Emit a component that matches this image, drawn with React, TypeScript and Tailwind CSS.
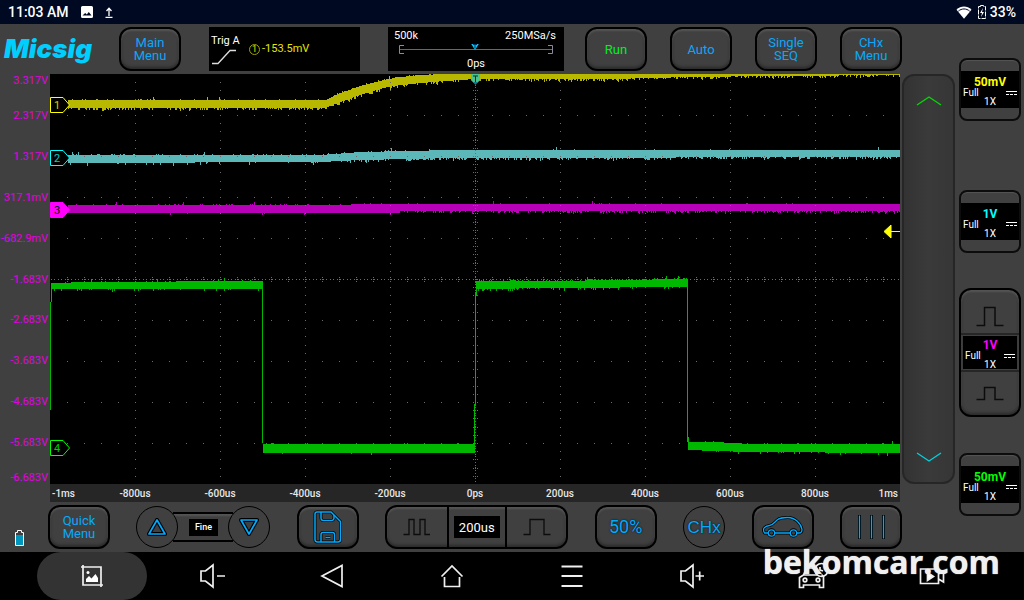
import type { ReactNode } from 'react'
import clsx from 'clsx'

const PLOT_W = 850
const PLOT_H = 410

const VOLT_LABELS = ['2.317V', '1.317V', '317.1mV', '-682.9mV', '-1.683V', '-2.683V', '-3.683V', '-4.683V', '-5.683V']
const TIME_LABELS = ['-800us', '-600us', '-400us', '-200us', '0ps', '200us', '400us', '600us', '800us']

// x, top, bottom
type Key = [number, number, number]

interface Trace {
  color: string
  keys: Key[]
  up: number
  down: number
  seed: number
}

const TRACES: Trace[] = [
  {
    color: '#b8b800',
    up: 0.12,
    down: 0.4,
    seed: 7,
    keys: [[18, 26, 34], [275, 26, 34], [290, 19, 28], [310, 12, 21], [333, 6, 14], [350, 3, 11], [370, 1, 9], [395, 0, 7], [425, 0, 5], [560, 0, 5], [640, 0, 3], [720, 0, 2], [850, 0, 1]],
  },
  {
    color: '#5cb8b8',
    up: 0.15,
    down: 0.1,
    seed: 21,
    keys: [[18, 81, 89], [270, 81, 88], [310, 78, 86], [356, 77, 85]],
  },
  {
    color: '#5cb8b8',
    up: 0.02,
    down: 0.4,
    seed: 24,
    keys: [[356, 77, 85], [400, 76, 84], [850, 76, 83]],
  },
  {
    color: '#b800b8',
    up: 0.1,
    down: 0.02,
    seed: 35,
    keys: [[18, 131, 139], [250, 131, 139], [350, 130, 139]],
  },
  {
    color: '#b800b8',
    up: 0.03,
    down: 0.4,
    seed: 38,
    keys: [[350, 130, 137], [850, 130, 137]],
  },
  { color: '#00b800', up: 0.05, down: 0.1, seed: 41, keys: [[1, 209, 215], [40, 208, 215], [213, 207, 215]] },
  { color: '#00b800', up: 0.02, down: 0.03, seed: 52, keys: [[213, 370, 379], [425, 370, 379]] },
  { color: '#00b800', up: 0.2, down: 0.2, seed: 63, keys: [[426, 207, 215], [500, 207, 214], [638, 205, 213]] },
  { color: '#00b800', up: 0.04, down: 0.08, seed: 74, keys: [[638, 368, 376], [665, 368, 377], [700, 370, 378], [850, 370, 379]] },
]

function tracePath({ keys, up, down, seed }: Trace) {
  let s = seed
  const rand = () => {
    s = (s * 16807) % 2147483647
    return s / 2147483647
  }
  for (let i = 0; i < 5; i++) rand()
  let d = ''
  for (let k = 0; k < keys.length - 1; k++) {
    const [x0, t0, b0] = keys[k]
    const [x1, t1, b1] = keys[k + 1]
    for (let x = x0; x < x1; x++) {
      const f = (x - x0) / (x1 - x0)
      let top = Math.round(t0 + (t1 - t0) * f)
      let bottom = Math.round(b0 + (b1 - b0) * f)
      if (rand() < up) top -= rand() < 0.1 ? 3 : 1
      if (rand() < down) bottom += rand() < 0.06 ? 3 : rand() < 0.5 ? 2 : 1
      top = Math.max(0, top)
      d += `M${x} ${top}h1V${bottom}h-1z`
    }
  }
  return d
}

function gridPath() {
  let d = ''
  const dot = (x: number, y: number) => {
    d += `M${Math.round(x)} ${Math.round(y)}h1v1h-1z`
  }
  for (let i = 1; i < 10; i++) {
    for (let j = 1; j < 50; j++) dot(i * 85, j * 8.2)
    for (let j = 1; j < 50; j++) dot(j * 17, i * 41)
  }
  // centre cross hair
  for (let y = 8; y < PLOT_H; y += 8.2 / 3) dot(425, y)
  for (let x = 1; x < PLOT_W; x += 3.4) dot(x, 205)
  for (let j = 1; j < 50; j++) {
    dot(423, j * 8.2)
    dot(427, j * 8.2)
    dot(j * 17, 203)
    dot(j * 17, 207)
  }
  return d
}

const GRID = gridPath()
const WAVES = TRACES.map(t => ({ color: t.color, d: tracePath(t) }))

function ChannelMarker({ n, y, color, filled }: { n: number; y: number; color: string; filled?: boolean }) {
  return (
    <g>
      <path
        d={`M.5 ${y - 7.5}H13L19.5 ${y}L13 ${y + 7.5}H.5z`}
        fill={filled ? color : '#000'}
        stroke={color}
      />
      <text x="7" y={y + 4} textAnchor="middle" fontSize="11" fill={filled ? '#000' : color} opacity={filled ? 1 : 0.8}>
        {n}
      </text>
    </g>
  )
}

function Plot() {
  return (
    <svg
      viewBox={`0 0 ${PLOT_W} ${PLOT_H}`}
      preserveAspectRatio="none"
      className="block h-[410px] min-w-0 flex-1 bg-black"
    >
      <g shapeRendering="crispEdges">
        {WAVES.map((w, i) => (
          <path key={i} d={w.d} fill={w.color} />
        ))}
        <path
          d="M0 228h1v108h-1zM1 212h1v16h-1zM212 207h1v162h-1zM424 330h1v46h-1zM425 218h1v114h-1zM426 212h1v10h-1zM637 205h1v163h-1zM638 363h1v8h-1z"
          fill="#00b800"
        />
        <path d={GRID} fill="#6b6b6b" />
      </g>
      <ChannelMarker n={1} y={31} color="#ffff00" />
      <ChannelMarker n={2} y={84} color="#00ffff" />
      <ChannelMarker n={3} y={136} color="#ff00ff" filled />
      <ChannelMarker n={4} y={374} color="#00ff00" />
      {/* Trigger position and level */}
      <path d="M421 0h9v6l-4.500 5l-4.500-5z" fill="#0e7f94" />
      <path d="M421 0h9v6l-2 2h-5l-2-2z" fill="#4cc38c" />
      <path d="M423 2h5M425.500 2v6" stroke="#0a3030" />
      <path d="M834 157.500l7-6.500v13zM841 157.500h9" fill="#ff0" stroke="#ff0" />
    </svg>
  )
}

const PANEL = 'rounded-xl border-2 border-black bg-[#404040] shadow-[inset_0_2px_2px_#555,inset_0_-2px_3px_#2a2a2a]'

function PadButton({ children, label, className }: { children: ReactNode; label?: string; className?: string }) {
  return (
    <button
      aria-label={label}
      className={clsx(
        PANEL,
        'flex h-11 w-[62px] shrink-0 items-center justify-center text-center text-[13px] leading-[13px]',
        className ?? 'text-[#0aa8f8]'
      )}
    >
      {children}
    </button>
  )
}

function RoundButton({ children, label }: { children: ReactNode; label: string }) {
  return (
    <button
      aria-label={label}
      className="relative flex size-[42px] shrink-0 items-center justify-center rounded-full border border-black bg-[#404040] text-[#0af]"
    >
      {children}
    </button>
  )
}

function StatusBar() {
  return (
    <div className="flex h-6 shrink-0 items-center bg-[#000922] px-2 text-sm font-medium text-white">
      <span>11:03 AM</span>
      <svg width="12" height="12" viewBox="0 0 12 12" className="ml-3">
        <path fillRule="evenodd" fill="#fff" d="M1.500 0h9A1.500 1.500 0 0 1 12 1.500v9a1.500 1.500 0 0 1-1.500 1.500h-9A1.500 1.500 0 0 1 0 10.500v-9A1.500 1.500 0 0 1 1.500 0zM1.500 9.500h9L7.800 6L5.800 8.500L4.200 7z" />
      </svg>
      <svg width="8" height="11" viewBox="0 0 8 11" className="ml-3">
        <path d="M4 9V1.500M1.500 4L4 1.300L6.500 4M.5 10.300h7" fill="none" stroke="#fff" strokeWidth="1.300" />
      </svg>
      <svg width="16" height="13" viewBox="0 0 16 13" className="ml-auto">
        <path d="M.5 3.800C4.800-.6 11.200-.6 15.500 3.800L8 12.700z" fill="#fff" />
        <path d="M2.300 5.200c3.300-3 8.100-3 11.400 0" fill="none" stroke="#000922" />
      </svg>
      <svg width="8" height="14" viewBox="0 0 8 14" className="mr-1 ml-1.5">
        <path d="M2.500 1.500V.5h3v1H7.500v12H.5v-12z" fill="none" stroke="#fff" strokeDasharray="5 1" />
        <path d="M5 3L2 8h2L3 12L6 7H4z" fill="#fff" />
      </svg>
      <span>33%</span>
    </div>
  )
}

function Header() {
  return (
    <div className="flex h-[50px] items-center justify-between pr-[54px]">
      <div className="flex items-center gap-7">
        <span className="w-[91px] pl-1 font-['Inter',sans-serif] text-[26px] leading-6 font-black text-[#00ceff] italic">
          Micsig
        </span>
        <PadButton>
          Main
          <br />
          Menu
        </PadButton>
        <div className="flex h-11 w-[151px] bg-black px-0.5 text-[11px] text-white">
          <div className="w-[38px] pt-1.5 leading-4">
            Trig A
            <svg width="26" height="16" viewBox="0 0 26 16">
              <path d="M1 14.500h6L19 1.500h6" fill="none" stroke="#ddd" strokeWidth="1.300" />
            </svg>
          </div>
          <div className="flex items-center gap-0.5 text-[#e6e600]">
            <span className="flex size-[11px] items-center justify-center rounded-full border border-[#a0a000] text-[9px] leading-none">
              1
            </span>
            -153.5mV
          </div>
        </div>
        <div className="h-11 w-44 bg-black px-1.5 pt-px text-[11px] leading-4 text-white">
          <div className="flex justify-between pr-0.5">
            <span>500k</span>
            <span>250MSa/s</span>
          </div>
          <svg width="154" height="12" viewBox="0 0 154 12" className="mx-auto block">
            <path d="M1 5.500h152" stroke="#f0f" />
            <path d="M5 1.500H.5v8H5M149 1.500h4.500v8H149" fill="none" stroke="#8a8a9a" />
            <path d="M71 -2h10l-5 8z" fill="#0cf" />
            <path d="M74 .5h4M76 .5v4" stroke="#036" />
          </svg>
          <div className="text-center leading-4">0ps</div>
        </div>
      </div>
      <div className="flex gap-[23px]">
        <PadButton className="text-[#00f020]">Run</PadButton>
        <PadButton>Auto</PadButton>
        <PadButton>
          Single
          <br />
          SEQ
        </PadButton>
        <PadButton>
          CHx
          <br />
          Menu
        </PadButton>
      </div>
    </div>
  )
}

function VoltScale() {
  return (
    <div className="flex w-[50px] shrink-0 flex-col pt-px pr-0.5 text-right text-[11px] leading-3 whitespace-nowrap text-[#e000e0]">
      <span>3.317V</span>
      <div className="my-[23px] flex flex-1 flex-col justify-between">
        {VOLT_LABELS.map(v => (
          <span key={v}>{v}</span>
        ))}
      </div>
      <span>-6.683V</span>
    </div>
  )
}

function TimeScale() {
  return (
    <div className="mr-14 ml-[50px] grid h-[18px] grid-cols-20 items-center bg-[#262626] text-[10px] font-medium whitespace-nowrap text-[#e8e8e8]">
      <span className="pl-0.5">-1ms</span>
      {TIME_LABELS.map(t => (
        <span key={t} className="col-span-2 text-center">
          {t}
        </span>
      ))}
      <span className="pr-0.5 text-right">1ms</span>
    </div>
  )
}

function OffsetSlider() {
  return (
    <div className="mr-px ml-0.5 flex w-[53px] shrink-0 flex-col justify-between rounded-xl border-2 border-[#262626] bg-linear-to-r from-[#333] via-[#3a3a3a] to-[#363636]">
      <button aria-label="Move up" className="flex h-[50px] items-center justify-center">
        <svg width="26" height="12" viewBox="0 0 26 12">
          <path d="M1 10L13 2L25 10" fill="none" stroke="#00dc00" strokeWidth="1.300" />
        </svg>
      </button>
      <button aria-label="Move down" className="flex h-[50px] items-center justify-center">
        <svg width="26" height="12" viewBox="0 0 26 12">
          <path d="M1 2L13 10L25 2" fill="none" stroke="#00d2dc" strokeWidth="1.300" />
        </svg>
      </button>
    </div>
  )
}

function Toolbar() {
  return (
    <div className="flex h-[50px] items-center pr-[54px]">
      <div className="flex w-12 shrink-0 items-end self-stretch pb-1.5 pl-[15px]">
        <svg width="9" height="16" viewBox="0 0 9 16">
          <path d="M2.500 2.500v-2h4v2h2v13h-8v-13z" fill="none" stroke="#fff" />
          <path d="M1 5h7v10H1z" fill="#0096be" />
        </svg>
      </div>
      <div className="flex flex-1 items-center justify-between">
        <PadButton>
          Quick
          <br />
          Menu
        </PadButton>
        <div className="flex items-center">
          <div className="z-10">
            <RoundButton label="Increase">
              <svg width="20" height="18" viewBox="0 0 20 18" fill="none" strokeLinejoin="round">
                <path d="M10 2L18 16H2z" stroke="#000" strokeWidth="4" />
                <path d="M10 2L18 16H2z" stroke="#0af" strokeWidth="1.700" />
              </svg>
            </RoundButton>
          </div>
          <div className="-mx-[5px] flex h-[30px] w-[60px] items-center justify-center border-y-2 border-black bg-[#404040] shadow-[inset_0_2px_2px_#555]">
            <button className="h-[17px] w-[29px] bg-black pt-0.5 text-[9px] font-medium text-white">Fine</button>
          </div>
          <div className="z-10">
            <RoundButton label="Decrease">
              <svg width="20" height="18" viewBox="0 0 20 18" fill="none" strokeLinejoin="round">
                <path d="M10 16L18 2H2z" stroke="#000" strokeWidth="4" />
                <path d="M10 16L18 2H2z" stroke="#0af" strokeWidth="1.700" />
              </svg>
            </RoundButton>
          </div>
        </div>
        <PadButton label="Save">
          <svg width="30" height="34" viewBox="0 0 30 34" fill="none">
            {['#000', '#0af'].map((c, i) => (
              <g key={c} stroke={c} strokeWidth={i ? 1.5 : 3}>
                <path d="M4 2H18L27.500 11.500v18a2.500 2.500 0 0 1-2.500 2.500H4.500A2.500 2.500 0 0 1 2 29.500V4a2 2 0 0 1 2-2z" />
                <path d="M8 2v6a2.500 2.500 0 0 0 2.500 2.500h8a2.500 2.500 0 0 0 2.500-2.500V5M8 32v-7.500a2 2 0 0 1 2-2h9.500a2 2 0 0 1 2 2V32" />
                <path d="M12.500 27.500h5" />
              </g>
            ))}
          </svg>
        </PadButton>
        <div className={clsx(PANEL, 'flex h-11 w-[183px] divide-x-2 divide-black')}>
          <button aria-label="Shorter time base" className="flex flex-1 items-center justify-center">
            <svg width="28" height="18" viewBox="0 0 28 18">
              <path d="M.5 16.500h5.500V1.500h5v15h6V1.500h5v15h5" fill="none" stroke="#0c0c0c" strokeWidth="1.300" />
            </svg>
          </button>
          <div className="flex w-[58px] items-center justify-center">
            <button className="h-[22px] w-[46px] bg-black pt-0.5 text-[13px] text-white">200us</button>
          </div>
          <button aria-label="Longer time base" className="flex flex-1 items-center justify-center">
            <svg width="28" height="18" viewBox="0 0 28 18">
              <path d="M.5 16.500H7V1.500h14v15h6.500" fill="none" stroke="#0c0c0c" strokeWidth="1.300" />
            </svg>
          </button>
        </div>
        <PadButton>
          <span className="text-lg text-[#0af] text-shadow-[0_0_2px_#000]">50%</span>
        </PadButton>
        <RoundButton label="CHx">
          <span className="pt-0.5 font-['Liberation_Sans',sans-serif] text-[17px] text-shadow-[0_0_2px_#000]">CHx</span>
        </RoundButton>
        <PadButton label="Automotive">
          <svg width="42" height="22" viewBox="0 0 42 22" fill="none" strokeLinejoin="round">
            {['#000', '#0af'].map((c, i) => (
              <g key={c} stroke={c} strokeWidth={i ? 1.3 : 3}>
                <path d="M6 17H2.500C0 13 2.500 10 7.500 9.500C11 9 12 7 14.500 4.500C17.500 1.500 21 1.500 26 1.500c7 0 13 6 14 12c0 2-1 3.500-3 3.500H35M13 17h15" />
                <circle cx="9.500" cy="17" r="3.200" />
                <circle cx="31.500" cy="17" r="3.200" />
              </g>
            ))}
          </svg>
        </PadButton>
        <PadButton label="Cursors">
          <svg width="28" height="24" viewBox="0 0 28 24">
            <path d="M2.500 0v24M14.500 0v24M26.500 0v24" stroke="#000" strokeWidth="3" />
            <path d="M2.500 .5v23M14.500 .5v23M26.500 .5v23" stroke="#0af" strokeWidth="1.300" />
          </svg>
        </PadButton>
      </div>
    </div>
  )
}

function ChannelInfo({ scale, color }: { scale: string; color: string }) {
  return (
    <span className="flex flex-1 flex-col justify-center bg-black pt-[3px] text-center text-[10px] leading-[9px] text-white">
      <span className={clsx('text-xs leading-3 font-bold', color)}>{scale}</span>
      <span className="flex items-center justify-between px-0.5">
        Full
        <svg width="11" height="4" viewBox="0 0 11 4">
          <path d="M0 .5h11M0 3.500h3M4 3.500h3M8 3.500h3" stroke="#fff" />
        </svg>
      </span>
      <span>1X</span>
    </span>
  )
}

function ChannelButton({ scale, color }: { scale: string; color: string }) {
  return (
    <button className="flex h-[63px] w-full rounded-lg border-2 border-[#0c0c0c] bg-[#404040] py-[11px] shadow-[inset_0_1px_1px_#555]">
      <ChannelInfo scale={scale} color={color} />
    </button>
  )
}

function ChannelColumn() {
  return (
    <div className="grid w-[68px] shrink-0 grid-rows-4 items-center px-[3px] pb-0.5">
      <ChannelButton scale="50mV" color="text-[#ff0]" />
      <ChannelButton scale="1V" color="text-[#0ff]" />
      {/* selected channel, grows past its own row */}
      <div className={clsx(PANEL, 'flex h-[129px] flex-col')}>
        <button aria-label="Larger scale" className="flex h-[43px] items-center justify-center pt-2.5">
          <svg width="28" height="21" viewBox="0 0 28 21">
            <path d="M.5 19.500h8V1.500H19v18h8.500" fill="none" stroke="#0c0c0c" strokeWidth="1.500" />
          </svg>
        </button>
        <button className="flex h-[39px] border-y-2 border-[#262626] p-px px-0.5">
          <ChannelInfo scale="1V" color="text-[#f0f]" />
        </button>
        <button aria-label="Smaller scale" className="flex flex-1 items-center justify-center">
          <svg width="28" height="15" viewBox="0 0 28 15">
            <path d="M.5 13.500h8V1.500H19v12h8.500" fill="none" stroke="#0c0c0c" strokeWidth="1.500" />
          </svg>
        </button>
      </div>
      <ChannelButton scale="50mV" color="text-[#0f0]" />
    </div>
  )
}

const NAV_ITEMS: { label: string; icon: ReactNode }[] = [
  {
    label: 'Screenshot',
    icon: (
      <>
        <path d="M3 1v20h20M1 3h20v20" />
        <path d="M6 18v-3l3-3l2.500 2.500L15.500 10l2.500 4v4z" fill="#fff" stroke="none" />
        <circle cx="8" cy="8.500" r="1.500" fill="#fff" stroke="none" />
      </>
    ),
  },
  { label: 'Volume down', icon: <path d="M1 7h4.500L13 1v22L5.500 17H1zM17 12h8" /> },
  { label: 'Back', icon: <path d="M2 12L22 1.500v21z" /> },
  { label: 'Home', icon: <path d="M1.500 12.500L12 2l10.500 10.500M4.500 13v9.500h15V13" /> },
  { label: 'Recent apps', icon: <path d="M1.500 2.500h21M1.500 12h21M1.500 22h21" strokeWidth="2.200" /> },
  { label: 'Volume up', icon: <path d="M1 7h4.500L13 1v22L5.500 17H1zM15.500 12h8.500M19.700 7.500v9" /> },
  {
    label: 'Car diagnostics',
    icon: (
      <>
        <path d="M15 4H6.500L3.500 11L-.5 13.500V23.500h4V21h16v2.500h4v-11L21.500 10.500M3.500 11h14" />
        <circle cx="5" cy="16" r="1.800" />
        <circle cx="18" cy="16" r="1.800" />
        <circle cx="21.500" cy="6" r="6.500" />
        <path d="M20 3v3l3 1" />
      </>
    ),
  },
  {
    label: 'Screen recorder',
    icon: (
      <>
        <path d="M.5 5h18v14.500H.5zM18.500 10l5-3v11l-5-3" />
        <path d="M7.500 8.500l6 4l-6 4z" fill="#fff" />
      </>
    ),
  },
]

function NavBar() {
  return (
    <nav className="relative flex h-12 shrink-0 bg-black px-8">
      <span className="pointer-events-none absolute -top-2 right-6 font-['Open_Sans',sans-serif] text-[32px] leading-9 font-bold text-[#f0f0f0] text-shadow-[0_0_1px_#f0f0f0]">
        bekomcar.com
      </span>
      {NAV_ITEMS.map((item, i) => (
        <button key={item.label} aria-label={item.label} className="flex flex-1 items-center px-[5px]">
          <span className={clsx('flex h-full w-full items-center justify-center rounded-full', i === 0 && 'bg-[#333]')}>
            <svg
              width="24"
              height="24"
              viewBox="0 0 24 24"
              className="overflow-visible"
              fill="none"
              stroke="#f0f0f0"
              strokeWidth="1.700"
            >
              {item.icon}
            </svg>
          </span>
        </button>
      ))}
    </nav>
  )
}

export default function App() {
  return (
    <div className="flex min-h-screen flex-col bg-black font-['Roboto',sans-serif]">
      <StatusBar />
      <div className="flex flex-1 bg-[#404040]">
        <main className="min-w-0 flex-1">
          <Header />
          <div className="flex">
            <VoltScale />
            <Plot />
            <OffsetSlider />
          </div>
          <TimeScale />
          <Toolbar />
        </main>
        <ChannelColumn />
      </div>
      <NavBar />
    </div>
  )
}
